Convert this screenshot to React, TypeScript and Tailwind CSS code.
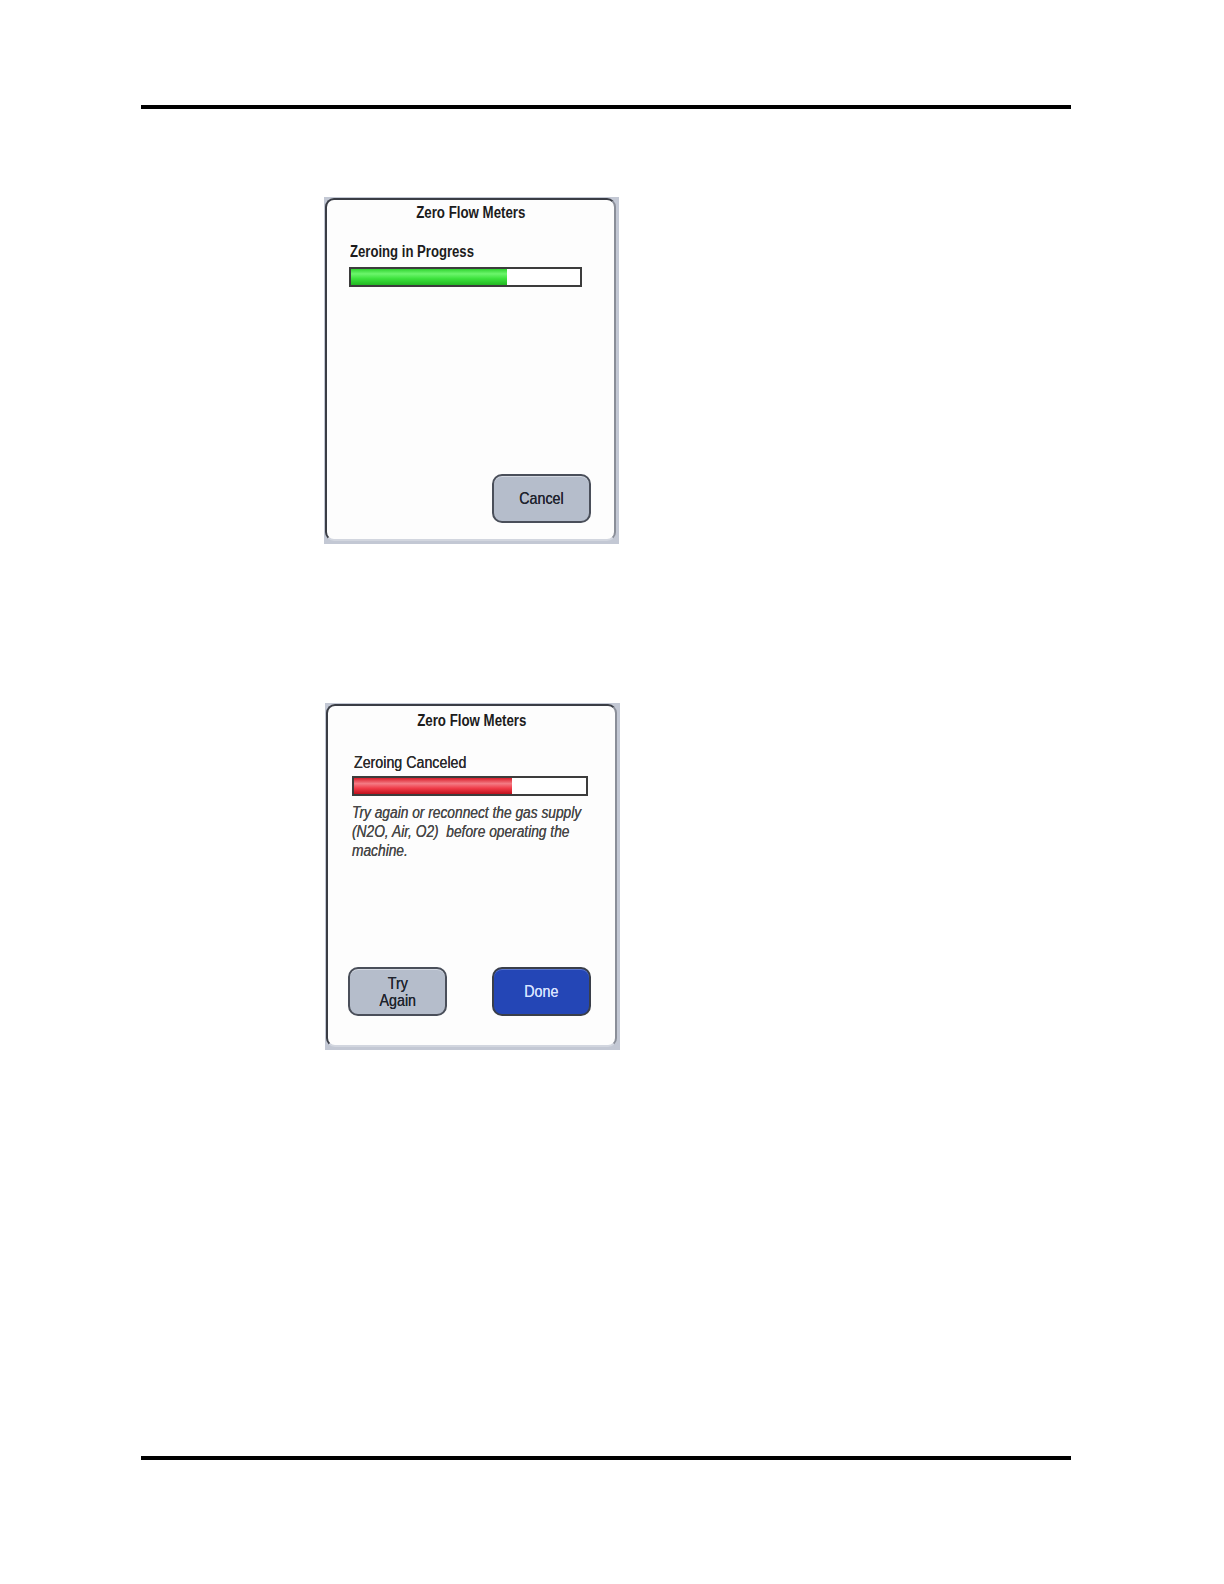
import React from "react";

const font = { fontFamily: '"Liberation Sans", Arial, sans-serif' };

function Panel({ children }: { children: React.ReactNode }) {
  return (
    <div className="bg-[#c3c8d4] pl-[1px] pr-[3px] pb-[3px] pt-[1px] w-[295px] h-[347px]">
      <div className="h-full w-full bg-[#fdfdfd] rounded-[9px] border-t-[2px] border-l-[2px] border-r-[2px] border-b-[2px] border-t-[#3a3d45] border-l-[#3a3d45] border-r-[#8a8e98] border-b-[#d2d6df] flex flex-col">
        {children}
      </div>
    </div>
  );
}

function Bar({ pct, kind }: { pct: number; kind: "green" | "red" }) {
  const fill =
    kind === "green"
      ? "bg-[linear-gradient(180deg,#2fd42f_0%,#6cf56c_30%,#3de23d_60%,#22b822_100%)]"
      : "bg-[linear-gradient(180deg,#d81d2a_0%,#f47b84_35%,#ef3a47_65%,#c0101c_100%)]";
  return (
    <div className="h-[20px] border-[2px] border-[#3c3c3c] bg-white flex">
      <div className={`h-full ${fill}`} style={{ width: `${pct}%` }} />
    </div>
  );
}

function Btn({ children, blue }: { children: React.ReactNode; blue?: boolean }) {
  return (
    <div
      className={
        blue
          ? "w-[99px] h-[49px] rounded-[10px] border-[2px] border-[#3a3f4a] bg-[#2446b6] text-[#d9e2ff] flex items-center justify-center text-center shadow-[inset_0_1px_0_#5b77d0] [text-shadow:0_0_0.6px_#d9e2ff]"
          : "w-[99px] h-[49px] rounded-[10px] border-[2px] border-[#4a4f5a] bg-[#b5bdcb] text-[#1f242e] flex items-center justify-center text-center shadow-[inset_0_1px_0_#d4d9e2] [text-shadow:0_0_0.6px_#1f242e]"
      }
    >
      <span className="inline-block scale-x-[0.84] origin-center text-[17px] leading-[17px] whitespace-nowrap">{children}</span>
    </div>
  );
}

export default function App() {
  return (
    <div className="w-[1224px] min-h-[1584px] bg-white relative" style={font}>
      <div className="pt-[105px]">
        <div className="ml-[141px] w-[930px] h-[4px] bg-black" />
        <div className="ml-[324px] mt-[88px]">
          <Panel>
            <div className="text-center mt-[4px] leading-[18px]">
              <span className="inline-block scale-x-[0.83] origin-center font-bold text-[16px] text-[#1c1c1c] whitespace-nowrap">
                Zero Flow Meters
              </span>
            </div>
            <div className="pl-[22px] pr-[32px] mt-[21px]">
              <div className="leading-[18px] mb-[6px] ml-[1px]">
                <span className="inline-block scale-x-[0.82] origin-left font-bold text-[16px] text-[#1c1c1c] whitespace-nowrap">
                  Zeroing in Progress
                </span>
              </div>
              <Bar pct={68} kind="green" />
            </div>
            <div className="flex-1" />
            <div className="flex justify-end pr-[23px] pb-[16px]">
              <Btn>Cancel</Btn>
            </div>
          </Panel>
        </div>
        <div className="ml-[325px] mt-[159px]">
          <Panel>
            <div className="text-center mt-[6px] leading-[18px]">
              <span className="inline-block scale-x-[0.83] origin-center font-bold text-[16px] text-[#1c1c1c] whitespace-nowrap">
                Zero Flow Meters
              </span>
            </div>
            <div className="pl-[24px] pr-[27px] mt-[24px]">
              <div className="leading-[18px] mb-[4px] ml-[2px]">
                <span className="inline-block scale-x-[0.89] origin-left text-[16px] text-[#2a2a2a] whitespace-nowrap [text-shadow:0_0_0.4px_#2a2a2a]">
                  Zeroing Canceled
                </span>
              </div>
              <Bar pct={68} kind="red" />
              <div className="mt-[7px] origin-left scale-x-[0.86] whitespace-nowrap italic text-[16px] text-[#484848] leading-[19px] [text-shadow:0_0_0.4px_#484848]">
                Try again or reconnect the gas supply
                <br />
                (N2O, Air, O2)&nbsp; before operating the
                <br />
                machine.
              </div>
            </div>
            <div className="flex-1" />
            <div className="flex justify-between pl-[20px] pr-[24px] pb-[29px]">
              <Btn>
                Try
                <br />
                Again
              </Btn>
              <Btn blue>Done</Btn>
            </div>
          </Panel>
        </div>
        <div className="ml-[141px] mt-[406px] w-[930px] h-[4px] bg-black" />
      </div>
    </div>
  );
}
